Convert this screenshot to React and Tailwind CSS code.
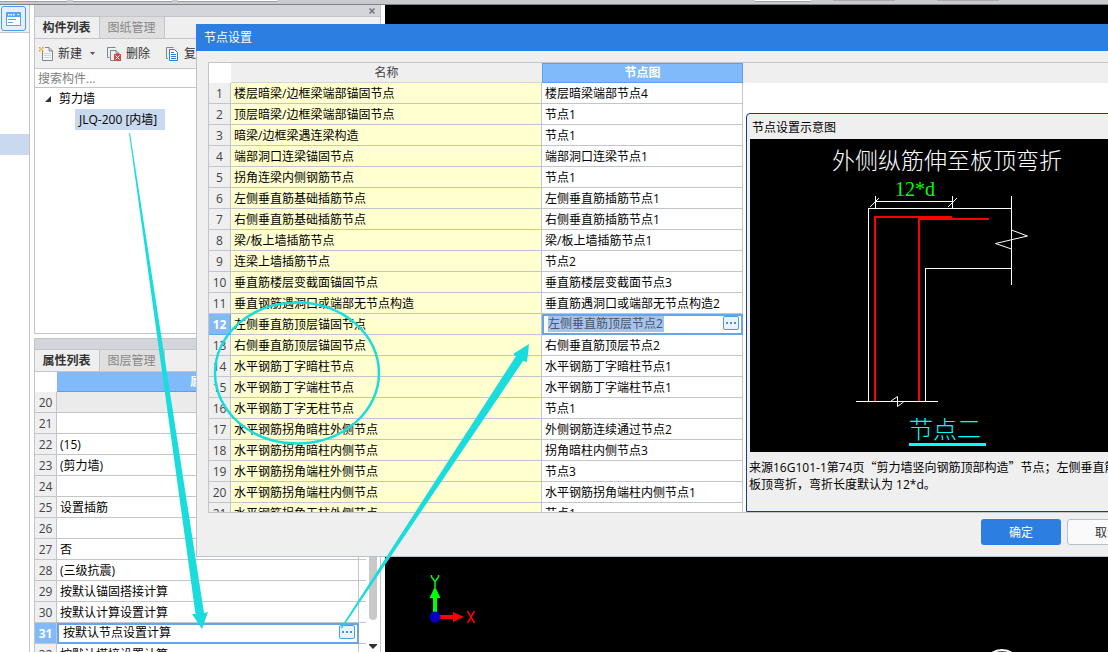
import { useState } from "react";

const properties = [
  { id: 20, value: "", muted: true },
  { id: 21, value: "" },
  { id: 22, value: "(15)" },
  { id: 23, value: "(剪力墙)" },
  { id: 24, value: "" },
  { id: 25, value: "设置插筋" },
  { id: 26, value: "" },
  { id: 27, value: "否" },
  { id: 28, value: "(三级抗震)" },
  { id: 29, value: "按默认锚固搭接计算" },
  { id: 30, value: "按默认计算设置计算" },
  { id: 31, value: "按默认节点设置计算" },
  { id: 32, value: "按默认搭接设置计算" },
];

const nodes = [
  ["楼层暗梁/边框梁端部锚固节点", "楼层暗梁端部节点4"],
  ["顶层暗梁/边框梁端部锚固节点", "节点1"],
  ["暗梁/边框梁遇连梁构造", "节点1"],
  ["端部洞口连梁锚固节点", "端部洞口连梁节点1"],
  ["拐角连梁内侧钢筋节点", "节点1"],
  ["左侧垂直筋基础插筋节点", "左侧垂直筋插筋节点1"],
  ["右侧垂直筋基础插筋节点", "右侧垂直筋插筋节点1"],
  ["梁/板上墙插筋节点", "梁/板上墙插筋节点1"],
  ["连梁上墙插筋节点", "节点2"],
  ["垂直筋楼层变截面锚固节点", "垂直筋楼层变截面节点3"],
  ["垂直钢筋遇洞口或端部无节点构造", "垂直筋遇洞口或端部无节点构造2"],
  ["左侧垂直筋顶层锚固节点", "左侧垂直筋顶层节点2"],
  ["右侧垂直筋顶层锚固节点", "右侧垂直筋顶层节点2"],
  ["水平钢筋丁字暗柱节点", "水平钢筋丁字暗柱节点1"],
  ["水平钢筋丁字端柱节点", "水平钢筋丁字端柱节点1"],
  ["水平钢筋丁字无柱节点", "节点1"],
  ["水平钢筋拐角暗柱外侧节点", "外侧钢筋连续通过节点2"],
  ["水平钢筋拐角暗柱内侧节点", "拐角暗柱内侧节点3"],
  ["水平钢筋拐角端柱外侧节点", "节点3"],
  ["水平钢筋拐角端柱内侧节点", "水平钢筋拐角端柱内侧节点1"],
  ["水平钢筋拐角无柱外侧节点", "节点1"],
];

function MoreButton() {
  return (
    <button
      aria-label="更多"
      className="flex h-[14px] w-4 shrink-0 items-center justify-center rounded-[2px] border border-[#4f9be3] bg-[#eaf2fb]"
    >
      <svg width="10" height="2" viewBox="0 0 10 2" fill="#4a8fdc" shapeRendering="crispEdges">
        <path d="M0 0h2v2H0zM4 0h2v2H4zM8 0h2v2H8z" />
      </svg>
    </button>
  );
}

function Tabs({ active, other }) {
  return (
    <div className="flex h-[22px] shrink-0 border-b border-[#c3c5cc] bg-[#efefef]">
      <button className="w-16 pr-px font-bold text-[#333]">{active}</button>
      <button className="w-[66px] border-x border-[#c3c5cc] bg-[#dfdfdf] pr-px text-[#888]">{other}</button>
    </div>
  );
}

function NewIcon() {
  return (
    <svg width="15" height="16" viewBox="0 0 15 16" fill="none">
      <path d="M3.500 5V14.500H13.500V5L10 1.500H6" fill="#f5f6f8" stroke="#7d8894" />
      <path d="M10 1.500V5H13.500" stroke="#7d8894" />
      <path d="M5 7.500h7M5 9.500h7M5 11.500h7" stroke="#cfd3d8" />
      <path d="M0 1h1.500v1.500H0zM3 1h1.500v1.500H3zM1.500 2.500H3V4H1.500zM0 4h1.500v1.500H0zM3 4h1.500v1.500H3z" fill="#f09a1a" />
    </svg>
  );
}

function DeleteIcon() {
  return (
    <svg width="15" height="16" viewBox="0 0 15 16" fill="none">
      <path d="M2.500 11.500H.5V1.500H8.500" stroke="#7d8894" />
      <path d="M7 14.500H3.500V4.500H9L12.500 8" stroke="#7d8894" />
      <path d="M9 4.500V7.500H12" stroke="#7d8894" />
      <rect x="7" y="8" width="7" height="7" fill="#d64545" />
      <path d="M8.500 9.500l4 4M12.500 9.500l-4 4" stroke="#fff" />
    </svg>
  );
}

function CopyIcon() {
  return (
    <svg width="13" height="16" viewBox="0 0 13 16" fill="none">
      <path d="M2 12.500H.5V1.500H7.500" stroke="#7d8894" />
      <path d="M3.500 3.500H8.500L11.500 6.500V14.500H3.500z" fill="#fff" stroke="#2c7fe1" />
      <path d="M5 6.500h3M5 8.500h5M5 10.500h5M5 12.500h5" stroke="#2c7fe1" />
    </svg>
  );
}

function Sidebar() {
  return (
    <aside className="flex w-[347px] shrink-0 flex-col">
      {/* Component list */}
      <section className="flex h-[329px] shrink-0 flex-col border border-t-0 border-[#c3c5cc] bg-white">
        <div className="flex h-3 shrink-0 items-center justify-end border-b border-[#c3c5cc] bg-[#d4d5da] pr-[5px]">
          <button aria-label="关闭">
            <svg width="6" height="6" viewBox="0 0 6 6" stroke="#70737a" strokeWidth="1.500">
              <path d="M.5.5l5 5M5.500.5l-5 5" />
            </svg>
          </button>
        </div>
        <Tabs active="构件列表" other="图纸管理" />
        <div className="flex h-[30px] shrink-0 items-center border-b border-[#c3c5cc] bg-[#efefef] pl-1 text-[#333]">
          <button className="flex items-center gap-1">
            <NewIcon />
            新建
            <svg width="5" height="3" viewBox="0 0 5 3" className="ml-1" fill="#555">
              <path d="M0 0h5L2.500 3z" />
            </svg>
          </button>
          <button className="ml-3 flex items-center gap-1">
            <DeleteIcon />
            删除
          </button>
          <button className="ml-4 flex items-center gap-[5px]">
            <CopyIcon />
            复制
          </button>
        </div>
        <input
          aria-label="搜索构件"
          placeholder="搜索构件..."
          className="h-[19px] w-full shrink-0 border-b border-[#c3c5cc] bg-white px-[3px] placeholder:text-[#808080]"
        />
        <ul>
          <li>
            <div className="flex h-[21px] items-center gap-2 pl-2.5">
              <svg width="6" height="6" viewBox="0 0 6 6" fill="#333">
                <path d="M6 0v6H0z" />
              </svg>
              剪力墙
            </div>
            <ul className="pl-10">
              <li className="inline-block h-[21px] bg-[#c9d9ef] pr-2 pl-1 leading-[21px]">JLQ-200 [内墙]</li>
            </ul>
          </li>
        </ul>
      </section>

      {/* Property list */}
      <section className="mt-1 flex min-h-0 flex-1 flex-col border border-b-0 border-[#c3c5cc] bg-white">
        <div className="h-[11px] shrink-0 border-b border-[#c3c5cc] bg-[#d4d5da]" />
        <Tabs active="属性列表" other="图层管理" />
        <div className="flex min-h-0 flex-1">
          <div className="min-w-0 flex-1 overflow-hidden">
            <table className="w-[331px] table-fixed border-separate border-spacing-0">
              <colgroup>
                <col className="w-[22px]" />
                <col />
                <col className="w-[7px]" />
              </colgroup>
              <thead>
                <tr>
                  <th className="h-5 p-0" />
                  <th className="h-5 border-b border-[#5e9fe5] bg-[#81bafa] p-0 leading-[18px] text-white">属性值</th>
                  <th className="h-5 p-0" />
                </tr>
              </thead>
              <tbody>
                {properties.map((row) => {
                  const selected = row.id === 31;
                  return (
                    <tr key={row.id}>
                      <td
                        className={`h-[21px] border-r border-b border-[#c3c5cc] px-0 pt-0.5 pb-0 text-center leading-[18px] ${
                          selected ? "bg-[#81bafa] font-bold text-white" : "bg-[#efefef] text-[#444]"
                        }`}
                      >
                        {row.id}
                      </td>
                      {selected ? (
                        <td className="h-[21px] border-2 border-[#68a5e6] p-0">
                          <div className="flex h-[17px] items-start pr-0.5 pl-1">
                            <input
                              aria-label="节点设置"
                              defaultValue={row.value}
                              className="h-4 min-w-0 flex-1 leading-4"
                            />
                            <MoreButton />
                          </div>
                        </td>
                      ) : (
                        <td
                          className={`h-[21px] border-r border-b border-[#c3c5cc] pt-0.5 pr-0 pb-0 pl-[3px] leading-[18px] ${
                            row.muted ? "bg-[#ebebeb]" : ""
                          }`}
                        >
                          {row.value}
                        </td>
                      )}
                      <td className="h-[21px] border-b border-[#c3c5cc] p-0" />
                    </tr>
                  );
                })}
              </tbody>
            </table>
          </div>
          <div className="flex w-[14px] flex-col items-center">
            <div className="h-[248px] w-2 rounded-full bg-[#c9c9c9]" />
            <svg width="8" height="5" viewBox="0 0 8 5" className="mt-6" fill="#333">
              <path d="M0 0h8v1L4 5 0 1z" />
            </svg>
          </div>
        </div>
      </section>
    </aside>
  );
}

function Viewport() {
  return (
    <main className="min-w-0 flex-1 bg-black">
      <svg className="h-full w-full">
        {/* axis gizmo */}
        <path d="M48 608V593H44.500L50 581.500L55.500 593H52V608z" fill="#00ff00" />
        <path d="M55 610H68V607L79 612L68 617V614H55z" fill="#ff0000" />
        <circle cx="50" cy="612" r="5.500" fill="#0000c0" />
        <path d="M46.500 570v2l3.500 4.500v6M53.500 570v2l-3.500 4.500" fill="none" stroke="#00ff00" strokeWidth="1.500" />
        <path d="M82.500 606l7 12M89.500 606l-7 12" fill="none" stroke="#ff0000" strokeWidth="1.500" />
        <circle cx="617" cy="663" r="18" fill="#1f6b50" stroke="#fff" strokeWidth="2" />
      </svg>
    </main>
  );
}

function NodeDiagram() {
  return (
    <div className="h-[313px] bg-black">
      <svg width="358" height="313" viewBox="0 0 358 313" fill="none">
        <text x="82" y="30" fontSize="23" fontWeight="300" fill="#fff" fontFamily="'Noto Sans CJK SC', sans-serif">
          外侧纵筋伸至板顶弯折
        </text>
        <text x="145" y="57" fontSize="20" fill="#00ff00" fontFamily="'Liberation Serif', serif">
          12*d
        </text>
        <g stroke="#fff" shapeRendering="crispEdges">
          <path d="M125.500 57V69M202.500 57V69M125 62.500H203" />
          <path d="M118.500 262V69.500H261.500" />
          <path d="M261.500 57V145.500M261.500 129.500H175.500V262" />
          <path d="M106 262.500H188" />
        </g>
        <g stroke="#fff">
          <path d="M120 68l9-9M198 68l9-9" />
          <path d="M261.500 91l16 6-32 7.500 16 5.500" />
          <path d="M141 262l6.500-4.500v10l6-4.500" />
        </g>
        <g stroke="#ff0000" strokeWidth="2" shapeRendering="crispEdges">
          <path d="M125 262V78H202" />
          <path d="M169 262V80H239" />
        </g>
        <text x="159" y="299" fontSize="24" fontWeight="300" fill="#00ffff" fontFamily="'Noto Sans CJK SC', sans-serif">
          节点二
        </text>
        <path d="M159 305.500H236" stroke="#00ffff" strokeWidth="3" />
      </svg>
    </div>
  );
}

function NodeDialog() {
  const [selected, setSelected] = useState(12);

  return (
    <div role="dialog" aria-label="节点设置" className="absolute top-6 -right-[52px] left-[196px]">
      <div className="h-[27px] bg-[#2c7fe1] pl-2 leading-7 text-white">节点设置</div>
      <div className="border border-t-0 border-[#b9c0d0] bg-[#efefef] pt-[11px] pl-[11px]">
        <div className="flex h-[451px] overflow-hidden border border-r-0 border-[#c3c5cc] bg-white">
          <div className="shrink-0">
            <table className="w-[534px] table-fixed border-separate border-spacing-0">
              <colgroup>
                <col className="w-[22px]" />
                <col className="w-[311px]" />
                <col />
              </colgroup>
              <thead>
                <tr>
                  <th className="h-5 p-0" />
                  <th className="h-5 border-b border-[#d4d5da] bg-[#efefef] px-0 pt-px pb-0 leading-[18px] font-normal text-[#444]">
                    名称
                  </th>
                  <th className="h-5 border border-[#5e9fe5] bg-[#81bafa] p-0 leading-[18px] text-white">节点图</th>
                </tr>
              </thead>
              <tbody>
                {nodes.map(([name, value], i) => {
                  const active = i + 1 === selected;
                  return (
                    <tr key={name} onClick={() => setSelected(i + 1)}>
                      <td
                        className={`h-[21px] border-r border-b px-0 pt-0.5 pb-0 text-center leading-[18px] ${
                          active
                            ? "border-[#68a5e6] bg-[#81bafa] font-bold text-white"
                            : "border-[#c3c5cc] bg-[#efefef] text-[#444]"
                        }`}
                      >
                        {i + 1}
                      </td>
                      <td className="h-[21px] border-r border-b border-[#c3c5cc] bg-[#ffffcf] pt-0.5 pr-0 pb-0 pl-[3px] leading-[18px]">
                        {name}
                      </td>
                      {active ? (
                        <td className="h-[21px] border-2 border-[#68a5e6] p-0">
                          <div className="flex h-[17px] items-start justify-between pr-0.5 pl-1">
                            <input
                              aria-label={name}
                              defaultValue={value}
                              className="h-4 w-[116px] bg-[#a5c3ee] leading-4 text-[#4a5566]"
                            />
                            <MoreButton />
                          </div>
                        </td>
                      ) : (
                        <td className="h-[21px] border-r border-b border-[#c3c5cc] pt-0.5 pr-0 pb-0 pl-[3px] leading-[18px]">
                          {value}
                        </td>
                      )}
                    </tr>
                  );
                })}
              </tbody>
            </table>
          </div>

          <div className="flex min-w-0 flex-1 flex-col">
            <div className="h-5 shrink-0 bg-[#efefef]" />
            <section className="mt-[30px] ml-[3px] flex-1 rounded-tl border border-[#1c3f7c] bg-[#efefef]">
              <h2 className="h-[25px] pl-[5px] leading-7">节点设置示意图</h2>
              <div className="pl-[3px]">
                <NodeDiagram />
              </div>
              <p className="pt-1.5 pl-0.5 leading-[17px] whitespace-nowrap">
                来源16G101-1第74页<span className="font-['Noto_Sans_CJK_SC']">“</span>剪力墙竖向钢筋顶部构造
                <span className="font-['Noto_Sans_CJK_SC']">”</span>节点；左侧垂直筋伸至
                <br />
                板顶弯折，弯折长度默认为 12*d。
              </p>
            </section>
          </div>
        </div>
        <div className="flex justify-end gap-1.5 pt-1.5 pr-3 pb-[11px]">
          <button className="h-[26px] w-20 rounded-[3px] bg-[#2c7fe1] pt-0.5 text-white">确定</button>
          <button className="h-[26px] w-20 rounded-[3px] border border-[#b9c0d0] bg-[#fafafa] pt-0.5 text-[#333]">
            取消
          </button>
        </div>
      </div>
    </div>
  );
}

function Annotations() {
  return (
    <svg className="pointer-events-none absolute inset-0 h-full w-full" fill="#1adcdc">
      <path d="M129 133L130 133L204 613L208 612L202 629L192 614L195.500 614z" />
      <path d="M340.500 628L516 356L513 354L529 344L527 362L523 361L342 628.500z" />
      <ellipse cx="297" cy="373" rx="82" ry="70.500" fill="none" stroke="#1adcdc" strokeWidth="2.500" />
    </svg>
  );
}

export default function App() {
  return (
    <div className="relative flex h-screen flex-col overflow-hidden bg-white font-['Open_Sans','Noto_Sans_CJK_SC',sans-serif] text-xs text-black">
      {/* bottom edge of the ribbon */}
      <div className="flex h-[5px] shrink-0 items-start gap-1.5 border-b border-[#7e8388] bg-[#c8cacf]">
        <div className="h-0.5 w-[67px] border-b border-[#a0a0a0] bg-white" />
        <div className="h-0.5 w-[99px] border-b border-[#a0a0a0] bg-white" />
        <div className="h-0.5 w-[99px] border-b border-[#a0a0a0] bg-white" />
        <div className="ml-[472px] h-0.5 w-14 border-b border-[#a0a0a0] bg-white" />
        <div className="ml-4 h-px w-[62px] bg-[#a9abaf]" />
        <div className="ml-9 h-px w-[62px] bg-[#a9abaf]" />
      </div>

      <div className="flex min-h-0 flex-1">
        <nav className="w-[30px] shrink-0 border-r border-[#c3c5cc]">
          <div className="h-7 border-b border-[#c3c5cc] bg-[#efefef] pt-px pl-px">
            <button
              aria-label="导航"
              className="flex h-[25px] w-[25px] items-center justify-center rounded-[3px] border border-[#4f9be3] bg-[#e3effc]"
            >
              <svg width="15" height="14" viewBox="0 0 15 14">
                <rect width="15" height="14" rx="1" fill="#56a5f2" />
                <path d="M1 5h13v8H1z" fill="#fff" />
                <path d="M2 2h1.500v1.500H2zM4.500 2H6v1.500H4.500zM7 2h1.500v1.500H7zM11 2h2.500L12.250 3.500z" fill="#fff" />
                <path d="M2 7h8v1H2zM2 10h5v1H2z" fill="#56a5f2" />
              </svg>
            </button>
          </div>
          <div className="mt-[101px] h-[21px] bg-[#c9d9ef]" />
        </nav>
        <div className="w-1 shrink-0" />
        <Sidebar />
        <div className="w-1 shrink-0" />
        <Viewport />
      </div>

      <NodeDialog />
      <Annotations />
    </div>
  );
}
